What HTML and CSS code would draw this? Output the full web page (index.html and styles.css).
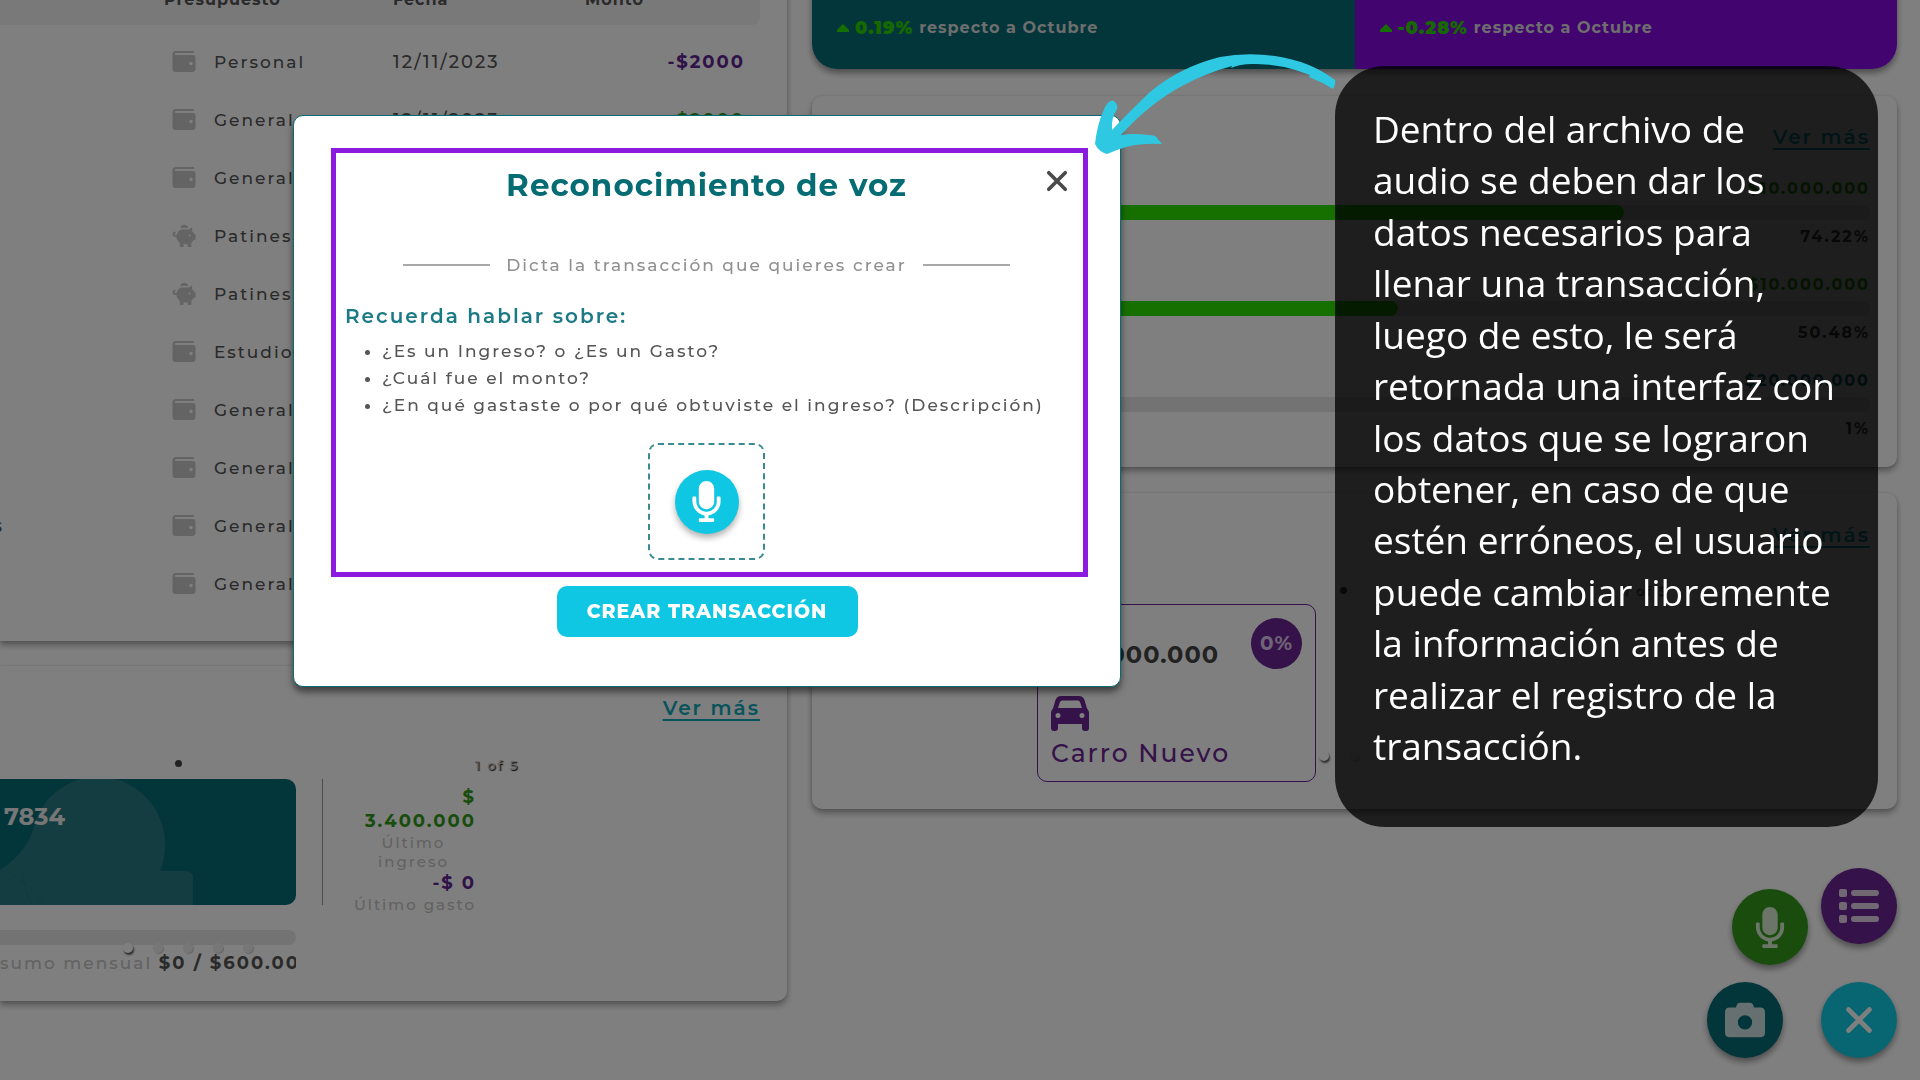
FILE: index.html
```html
<!DOCTYPE html>
<html lang="es">
<head>
<meta charset="utf-8">
<meta name="viewport" content="width=device-width, initial-scale=1">
<title>Reconocimiento de voz</title>
<link rel="stylesheet" href="styles.css">
</head>
<body>
<svg class="sprite" aria-hidden="true">
  <symbol id="wallet" viewBox="0 0 24 24"><path d="M4 1h17a1 1 0 0 1 1 1v1H4a1 1 0 0 0 0 2h17a2.500 2.500 0 0 1 2.500 2.500v11.500a3 3 0 0 1-3 3h-17a3 3 0 0 1-3-3V4.500A3.500 3.500 0 0 1 4 1z"/><circle class="hole" cx="19" cy="13.500" r="1.700"/></symbol>
  <symbol id="pig" viewBox="0 0 26 26"><path d="M9 4.500a4.300 4.300 0 0 1 8.500 0q-4-.8-8.500 0z"/><path d="M10 6h8l4-2.300-.4 4q2 1.500 2.600 3.300h1.300v6h-2q-.8 1.700-2.500 2.900V25h-4v-3h-4.500v3h-4v-4.200Q5 18 4.700 14q-4 0-4.200-3 .2-3.300 3.300-2.700l.3 1.500q-1.700.2-1.500 1.400.4 1.200 2.500.8Q6.500 7 10 6z"/><circle class="hole" cx="19" cy="12.500" r="1"/></symbol>
  <symbol id="mic" viewBox="0 0 352 512"><path d="M176 352c53.020 0 96-42.980 96-96V96c0-53.020-42.980-96-96-96S80 42.980 80 96v160c0 53.020 42.980 96 96 96zm160-160h-16c-8.840 0-16 7.160-16 16v48c0 74.800-64.490 134.820-140.790 127.380C96.710 376.890 48 317.110 48 250.300V208c0-8.840-7.160-16-16-16H16c-8.840 0-16 7.160-16 16v40.160c0 89.640 63.970 169.550 152 181.690V464H96c-8.840 0-16 7.160-16 16v16c0 8.840 7.160 16 16 16h160c8.840 0 16-7.160 16-16v-16c0-8.840-7.160-16-16-16h-56v-33.770C285.710 418.470 352 344.900 352 256v-48c0-8.840-7.160-16-16-16z"/></symbol>
  <symbol id="cross" viewBox="0 0 24 24"><path d="M3 3l18 18M21 3L3 21" fill="none" stroke="currentColor" stroke-width="4" stroke-linecap="round"/></symbol>
</svg>

<main class="page">
  <div class="column">
    <section class="card movements">
      <table>
        <colgroup><col class="col-desc"><col class="col-budget"><col class="col-date"><col></colgroup>
        <thead><tr><th></th><th>Presupuesto</th><th>Fecha</th><th>Monto</th></tr></thead>
        <tbody>
          <tr><td></td><td><span class="budget"><svg><use href="#wallet"/></svg>Personal</span></td><td>12/11/2023</td><td class="amount spent">-$2000</td></tr>
          <tr><td></td><td><span class="budget"><svg><use href="#wallet"/></svg>General</span></td><td>12/11/2023</td><td class="amount earned">$2000</td></tr>
          <tr><td></td><td><span class="budget"><svg><use href="#wallet"/></svg>General</span></td><td></td><td></td></tr>
          <tr><td></td><td><span class="budget"><svg><use href="#pig"/></svg>Patines</span></td><td></td><td></td></tr>
          <tr><td></td><td><span class="budget"><svg><use href="#pig"/></svg>Patines</span></td><td></td><td></td></tr>
          <tr><td></td><td><span class="budget"><svg><use href="#wallet"/></svg>Estudio</span></td><td></td><td></td></tr>
          <tr><td></td><td><span class="budget"><svg><use href="#wallet"/></svg>General</span></td><td></td><td></td></tr>
          <tr><td></td><td><span class="budget"><svg><use href="#wallet"/></svg>General</span></td><td></td><td></td></tr>
          <tr><td><span class="cut">s</span></td><td><span class="budget"><svg><use href="#wallet"/></svg>General</span></td><td></td><td></td></tr>
          <tr><td></td><td><span class="budget"><svg><use href="#wallet"/></svg>General</span></td><td></td><td></td></tr>
        </tbody>
      </table>
    </section>

    <section class="card accounts">
      <div class="more"><a href="#">Ver más</a></div>
      <div class="status"><span class="bullet"></span><span class="count">1 of 5</span></div>
      <div class="account">
        <div class="bank">
          <svg class="art" viewBox="0 0 193 126"><path d="M0 91Q30 72 36 40A63 64 0 1 1 160 92h20q13 0 13 5v29H0z"/><path class="ring" d="M22 91q2 20 10 35M0 91q32 10 43 35"/></svg>
          <strong>7834</strong>
        </div>
        <div class="last">
          <b class="earned">$<br>3.400.000</b>
          <span class="narrow">Último ingreso</span>
          <b class="spent">-$ 0</b>
          <span>Último gasto</span>
        </div>
      </div>
      <div class="usage">
        <div class="track"></div>
        <p>sumo mensual <b>$0 / $600.000</b></p>
        <div class="dots"><i class="on"></i><i></i><i></i><i></i><i></i></div>
      </div>
    </section>
  </div>

  <div class="column right">
    <section class="banner">
      <p class="income"><svg viewBox="0 0 12 8"><path d="M6 0l6 6v2H0V6z"/></svg><b>0.19%</b> respecto a Octubre</p>
      <p class="expense"><svg viewBox="0 0 12 8"><path d="M6 0l6 6v2H0V6z"/></svg><b>-0.28%</b> respecto a Octubre</p>
    </section>

    <section class="card budgets">
      <div class="more"><a href="#">Ver más</a></div>
      <div class="goal"><b class="lime">$10.000.000</b><div class="track"><div class="fill" style="width:74.22%"></div></div><b>74.22%</b></div>
      <div class="goal"><b class="lime">$10.000.000</b><div class="track"><div class="fill" style="width:50.48%"></div></div><b>50.48%</b></div>
      <div class="goal"><b class="teal">$20.000.000</b><div class="track"></div><b>1%</b></div>
    </section>

    <section class="card savings">
      <div class="more"><a href="#">Ver más</a></div>
      <div class="status"><span class="bullet"></span><span class="count">1 of 5</span></div>
      <article class="saving">
        <div class="saving-top"><strong>$20.000.000</strong><span class="badge">0%</span></div>
        <svg class="car" viewBox="0 0 38 35"><path fill-rule="evenodd" d="M10 0h18q4 0 5.500 4L36 12.500q2 1.500 2 4.500v15q0 3-3 3h-1q-3 0-3-3v-4H7v4q0 3-3 3H3q-3 0-3-3V17q0-3 2-4.500L4.500 4Q6 0 10 0zm1 4.500q-1.500 0-2 1.500L7 12h24l-2-6q-.5-1.500-2-1.500zM7 17a2.500 2.500 0 1 0 0 5 2.500 2.500 0 0 0 0-5zm24 0a2.500 2.500 0 1 0 0 5 2.500 2.500 0 0 0 0-5z"/></svg>
        <p>Carro Nuevo</p>
      </article>
      <div class="dots"><i class="on"></i><i></i></div>
    </section>
  </div>
</main>

<nav class="actions" aria-label="Acciones">
  <button class="fab fab-mic" aria-label="Dictar"><svg><use href="#mic"/></svg></button>
  <button class="fab fab-list" aria-label="Formulario"><svg viewBox="0 0 40 34"><rect width="8" height="8" y="0" rx="2"/><rect width="8" height="8" y="13" rx="2"/><rect width="8" height="8" y="26" rx="2"/><rect x="12" y="1" width="28" height="6" rx="3"/><rect x="12" y="14" width="28" height="6" rx="3"/><rect x="12" y="27" width="28" height="6" rx="3"/></svg></button>
  <button class="fab fab-camera" aria-label="Foto"><svg viewBox="0 0 42 36"><path fill-rule="evenodd" d="M5 5h6.500l1-3Q13.500 0 15.500 0h11q2 0 3 2l1 3H37q5 0 5 5v21q0 5-5 5H5q-5 0-5-5V10q0-5 5-5zm16 8a7.500 7.500 0 1 0 0 15 7.500 7.500 0 0 0 0-15z"/></svg></button>
  <button class="fab fab-close" aria-label="Cerrar acciones"><svg><use href="#cross"/></svg></button>
</nav>

<div class="backdrop"></div>

<div class="dialog" role="dialog" aria-labelledby="dialog-title">
  <div class="frame">
    <header>
      <h1 id="dialog-title">Reconocimiento de voz</h1>
      <button class="close" aria-label="Cerrar"><svg><use href="#cross"/></svg></button>
    </header>
    <p class="hint">Dicta la transacción que quieres crear</p>
    <h2>Recuerda hablar sobre:</h2>
    <ul>
      <li>¿Es un Ingreso? o ¿Es un Gasto?</li>
      <li>¿Cuál fue el monto?</li>
      <li>¿En qué gastaste o por qué obtuviste el ingreso? (Descripción)</li>
    </ul>
    <div class="recorder"><button aria-label="Grabar"><svg><use href="#mic"/></svg></button></div>
  </div>
  <button class="submit">CREAR TRANSACCIÓN</button>
</div>

<aside class="callout">Dentro del archivo de audio se deben dar los datos necesarios para llenar una transacción, luego de esto, le será retornada una interfaz con los datos que se lograron obtener, en caso de que estén erróneos, el usuario puede cambiar libremente la información antes de realizar el registro de la transacción.</aside>

<svg class="arrow" viewBox="1090 50 250 110" aria-hidden="true"><path d="M1335 80Q1336 84 1333 89Q1322 82 1309 77L1310 75Q1280 63 1252 64Q1240 64 1231 68L1232 66Q1206 73 1182 86Q1150 103 1121 135Q1133 133 1148 135Q1156 135 1157 138L1162 144Q1142 143 1126 147Q1116 150 1107 154Q1099 152 1095 144Q1097 124 1105 107Q1110 99 1114 101Q1118 104 1117 109Q1111 118 1112 130Q1128 113 1150 92Q1180 67 1220 57Q1246 52 1275 56Q1310 61 1335 80z"/></svg>
</body>
</html>
```
FILE: styles.css
```css
* { box-sizing: border-box; }

body {
  margin: 0;
  min-height: 100vh;
  overflow: hidden;
  position: relative;
  background: #fff;
  color: #555;
  font: 500 17px/24px Montserrat, Inter, sans-serif;
  letter-spacing: 2px;
}

p, h1, h2, ul { margin: 0; }
button { border: 0; padding: 0; font: inherit; letter-spacing: inherit; cursor: pointer; }
svg { display: block; fill: currentColor; }
.sprite { position: absolute; width: 0; height: 0; }
.hole { fill: #fff; }

/* dashboard */
.page {
  display: grid;
  grid-template-columns: 787fr 1085fr;
  gap: 25px;
  align-items: start;
  padding-right: 23px;
  margin-top: -40px;
}
.column { display: flex; flex-direction: column; gap: 25px; min-width: 0; }
.column.right { gap: 26px; }
.card {
  position: relative;
  border-radius: 10px;
  background: #fff;
  box-shadow: 0 4px 6px rgba(0, 0, 0, .35), 0 0 3px rgba(0, 0, 0, .1);
}
.more { text-align: right; line-height: 30px; font-size: 20px; font-weight: 600; }
.more a { color: #10a8b8; text-underline-offset: 4px; }
.earned { color: #329a1a; }
.spent { color: #5f2490; }
.teal { color: #066c74; }
.lime { color: #2ca010; }

.movements { border-radius: 0 10px 10px 0; padding: 7px 27px 28px 0; }
.movements table { width: 100%; border-collapse: separate; border-spacing: 0; table-layout: fixed; }
.col-desc { width: 164px; }
.col-budget { width: 229px; }
.col-date { width: 192px; }
.movements th { height: 58px; padding: 8px 0 0; background: #f3f3f3; text-align: left; font-size: 16px; font-weight: 700; letter-spacing: 1px; }
.movements th:last-child { border-radius: 0 0 8px 0; }
.movements tbody::before { content: ""; display: block; height: 8px; }
.movements td { height: 58px; padding: 0; font-size: 18px; }
.movements .amount { padding-right: 15px; text-align: right; font-weight: 700; }
.budget { display: flex; align-items: center; gap: 18px; padding-left: 8px; font-size: 17px; }
.budget svg { width: 24px; height: 26px; color: #c8c8c8; }
.cut { display: block; margin-left: -7px; }

.accounts { border-radius: 0 10px 10px 0; padding: 27px 27px 26px 0; }
.status { display: flex; align-items: center; height: 28px; margin-top: 28px; }
.bullet { width: 7px; height: 7px; border-radius: 50%; background: #444; }
.count { font-size: 13px; color: #ccc; text-shadow: 1px 1px 1px #000; }
.accounts .bullet { margin-left: 175px; margin-bottom: 4px; }
.accounts .count { margin-left: 293px; }
.account { display: flex; height: 126px; }
.bank { position: relative; width: 296px; border-radius: 0 10px 10px 0; background: #066c74; color: #eee; padding: 24px 4px; }
.bank strong { position: relative; font-size: 24px; line-height: 28px; letter-spacing: 0; }
.art { position: absolute; left: 0; bottom: 0; width: 193px; height: 126px; color: #297b83; }
.ring { fill: none; stroke: #23757d; }
.last {
  display: flex;
  flex-direction: column;
  align-items: flex-end;
  width: 154px;
  margin-left: 26px;
  padding-top: 6px;
  border-left: 1px solid #999;
  text-align: right;
  font-size: 15px;
  line-height: 19px;
  color: #c4c4c4;
}
.last b { font-size: 18px; line-height: 24px; }
.last .narrow { width: 125px; padding: 0 24px; text-align: center; }
.usage { position: relative; width: 296px; margin-top: 25px; overflow: hidden; white-space: nowrap; color: #c4c4c4; }
.usage p { height: 30px; padding-top: 6px; }
.usage b { color: #555; font-size: 18px; }
.track { height: 15px; border-radius: 8px; background: #e6e6e6; }
.usage .track { border-radius: 0 8px 8px 0; }
.dots { position: absolute; display: flex; gap: 20px; }
.dots i { width: 10px; height: 10px; border-radius: 50%; background: #eee; box-shadow: 1px 1px 1px #ccc; }
.dots .on { background: #fff; box-shadow: 1px 2px 2px #555; }
.usage .dots { left: 123px; top: 13px; }

.banner {
  display: flex;
  height: 109px;
  margin-bottom: 1px;
  border-radius: 0 0 25px 25px;
  overflow: hidden;
  box-shadow: 0 4px 6px rgba(0, 0, 0, .4);
  color: #ddd;
  font-size: 16px;
  font-weight: 700;
  letter-spacing: 1px;
}
.banner p { flex: 1; display: flex; align-items: center; gap: 6px; padding: 56px 25px 29px; }
.banner svg { width: 12px; height: 8px; color: #2ce000; }
.banner b { color: #2cd000; font-size: 18px; }
.income { background: #066c74; }
.expense { background: #840ae0; }

.budgets { display: flex; flex-direction: column; gap: 24px; padding: 26px 27px; }
.budgets .more { margin-bottom: 1px; }
.goal { display: flex; flex-direction: column; align-items: flex-end; padding-left: 77px; color: #444; font-size: 16px; }
.goal .track { width: 100%; margin: 4px 0 5px; }
.fill { height: 100%; border-radius: 0 8px 8px 0; background: #2ce000; }

.savings { padding: 27px; }
.savings .status { margin-top: 26px; }
.savings .bullet { margin-left: 501px; }
.savings .count { margin-left: 276px; }
.saving { width: 279px; margin-left: 198px; padding: 13px; border: 1px solid #6a2492; border-radius: 10px; color: #6a2492; }
.saving-top { display: flex; align-items: center; justify-content: flex-end; gap: 32px; height: 51px; }
.saving strong { padding-top: 22px; color: #444; font-size: 24px; line-height: 30px; letter-spacing: 1px; }
.badge { width: 51px; border-radius: 50%; background: #6a2492; color: #e0c8f0; text-align: center; font-size: 20px; font-weight: 700; line-height: 51px; letter-spacing: 1px; }
.car { width: 38px; height: 35px; margin-top: 27px; }
.saving p { margin-top: 8px; font-size: 25px; line-height: 29px; }
.savings .dots { left: 507px; bottom: 48px; }

/* floating actions */
.fab {
  position: fixed;
  display: grid;
  place-items: center;
  width: 76px;
  height: 76px;
  border-radius: 50%;
  color: rgba(255, 255, 255, .8);
  box-shadow: 0 4px 6px rgba(0, 0, 0, .4);
}
.fab svg { width: 40px; height: 36px; }
.fab-mic { right: 112px; bottom: 115px; background: #32981a; }
.fab-mic svg { height: 41px; }
.fab-list { right: 23px; bottom: 136px; background: #6a2492; }
.fab-camera { right: 137px; bottom: 22px; background: #066c74; }
.fab-close { right: 23px; bottom: 22px; background: #10cce4; }
.fab-close svg { width: 28px; height: 28px; color: #fff; }
.backdrop { position: fixed; inset: 0; background: rgba(0, 0, 0, .5); }

/* voice dialog */
.dialog {
  position: absolute;
  left: 293px;
  top: 115px;
  width: 828px;
  padding: 32px 37px 49px;
  border: 1px solid #066c74;
  border-radius: 10px;
  background: #fff;
  box-shadow: 0 5px 7px rgba(0, 0, 0, .5);
}
.frame { margin-right: -5px; padding: 12px 15px 12px 9px; border: 5px solid #8c1be0; }
.frame header { display: flex; align-items: center; height: 40px; }
.frame h1 { flex: 1; padding-left: 22px; text-align: center; color: #066c74; font-size: 31px; font-weight: 700; line-height: 40px; letter-spacing: 1px; }
.close { margin-bottom: 8px; background: none; color: #4a4a4a; }
.close svg { width: 22px; height: 22px; }
.hint { display: flex; align-items: center; justify-content: center; gap: 16px; margin-top: 48px; color: #909090; }
.hint::before, .hint::after { content: ""; width: 87px; border-top: 2px solid #a8a8a8; }
.frame h2 { margin-top: 27px; color: #1b7a85; font-size: 20px; font-weight: 600; line-height: 24px; }
.frame ul { margin-top: 10px; padding-left: 37px; line-height: 27px; white-space: nowrap; }
.recorder { display: grid; place-items: center; width: 117px; height: 117px; margin: 24px auto 0; border: 2px dashed #3a8a92; border-radius: 10px; }
.recorder button { display: grid; place-items: center; width: 64px; height: 64px; border-radius: 50%; background: #10c7e3; color: #fff; box-shadow: 0 4px 6px rgba(0, 0, 0, .3); }
.recorder svg { width: 29px; height: 41px; }
.submit { display: block; width: 301px; height: 51px; margin: 9px auto 0; border-radius: 10px; background: #10c7e3; color: #fff; font-size: 19px; font-weight: 800; letter-spacing: 1px; }

/* tutorial note */
.callout {
  position: absolute;
  left: 1335px;
  top: 66px;
  width: 543px;
  padding: 37px 30px 56px 38px;
  border-radius: 50px;
  background: rgba(0, 0, 0, .76);
  color: #fff;
  font: 400 37px/1.39 "Open Sans", "Noto Sans", sans-serif;
  letter-spacing: 0;
}
.arrow { position: absolute; left: 1090px; top: 50px; width: 250px; height: 110px; color: #2fc8e2; }
```
